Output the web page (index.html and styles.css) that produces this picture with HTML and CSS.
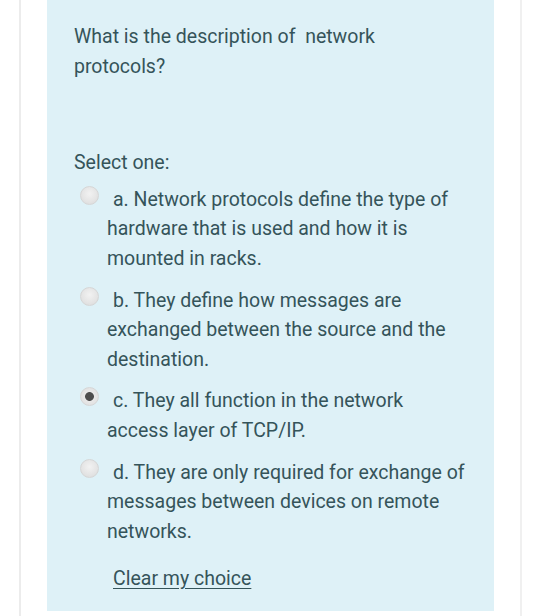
FILE: index.html
```html
<!DOCTYPE html>
<html lang="en">
<head>
<meta charset="utf-8">
<title>Question</title>
<link rel="stylesheet" href="styles.css">
</head>
<body>
<div class="card">
  <div class="formulation">
    <div class="qtext">What is the description of&nbsp; network<br>protocols?</div>
    <div class="prompt">Select one:</div>
    <div class="answer">
      <div class="opt"><span class="radio"></span>a. Network protocols define the type of<br>hardware that is used and how it is<br>mounted in racks.</div>
      <div class="opt"><span class="radio"></span>b. They define how messages are<br>exchanged between the source and the<br>destination.</div>
      <div class="opt"><span class="radio checked"></span>c. They all function in the network<br>access layer of TCP/IP.</div>
      <div class="opt"><span class="radio"></span>d. They are only required for exchange of<br>messages between devices on remote<br>networks.</div>
    </div>
    <a class="clear" href="#">Clear my choice</a>
  </div>
</div>
</body>
</html>
```

FILE: styles.css
```css
html, body {
  margin: 0;
  padding: 0;
  background: #ffffff;
}

body {
  font-family: Roboto, "Noto Sans", sans-serif;
  font-size: 19.5px;
  color: #35545a;
}

.card {
  margin-left: 19px;
  width: 503px;
  height: 616px;
  border-left: 2px solid #ececec;
  border-right: 2px solid #f0f0f0;
  padding-left: 26px;
  box-sizing: border-box;
}

.formulation {
  width: 447px;
  height: 611px;
  background: #def1f7;
  padding: 22px 0 0 27px;
  box-sizing: border-box;
  white-space: nowrap;
}

.qtext {
  line-height: 30px;
}

.prompt {
  margin-top: 66px;
  line-height: 30px;
}

.answer {
  margin-top: 7px;
}

.opt {
  line-height: 29.4px;
  padding-left: 33px;
  text-indent: -27px;
  margin-bottom: 12.5px;
}

.radio {
  display: inline-block;
  width: 19px;
  height: 19px;
  border-radius: 50%;
  box-sizing: border-box;
  border: 1px solid #d6d6d6;
  background: radial-gradient(circle at 50% 40%, #f2f2f2 0%, #e4e4e4 60%, #d9d9d9 100%);
  vertical-align: -2px;
  margin-right: 14px;
  text-indent: 0;
  position: relative;
  top: -3px;
}

.radio.checked {
  background: radial-gradient(circle, #4d4d4d 0, #4d4d4d 4px, #e8e8e8 4.8px, #dedede 100%);
}

.clear {
  display: inline-block;
  margin-top: 6px;
  margin-left: 39px;
  line-height: 30px;
  color: #35545a;
  text-decoration: underline;
  text-underline-offset: 3px;
}
```
